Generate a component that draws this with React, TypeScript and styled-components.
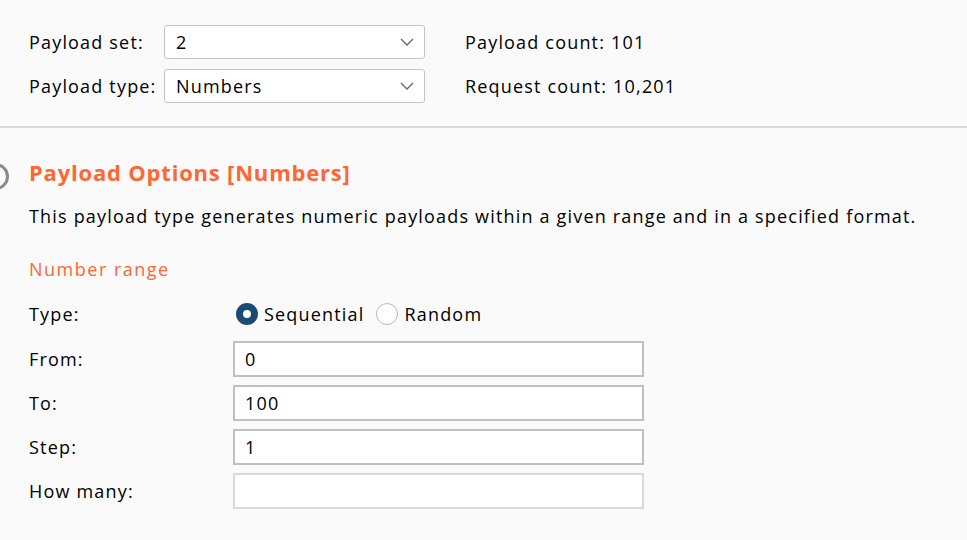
import React from "react";
import styled, { createGlobalStyle } from "styled-components";

const Global = createGlobalStyle`
  html, body { margin: 0; padding: 0; background: #fafafa; }
  body { font-family: "Open Sans", "Noto Sans", sans-serif; color: #000; }
  * { box-sizing: border-box; }
`;

const Page = styled.div`
  width: 967px;
  height: 540px;
  overflow: hidden;
  background: #fafafa;
  font-size: 18px;
  letter-spacing: 1.18px;
`;

const Top = styled.div`
  display: grid;
  grid-template-columns: 135px 261px auto;
  row-gap: 10px;
  padding: 25px 0 23px 29px;
  align-items: center;
  border-bottom: 2px solid #d9d9d9;
`;

const Label = styled.span<{ $gapBelow?: boolean }>`
  white-space: nowrap;
  line-height: 24px;
  margin-bottom: ${(p) => (p.$gapBelow ? "4px" : "0")};
`;

const Select = styled.div`
  height: 34px;
  border: 1.5px solid #c4c4c4;
  border-radius: 3px;
  background: #fff;
  display: flex;
  align-items: center;
  justify-content: space-between;
  padding: 0 10px 0 11px;
`;

const Stat = styled.span`
  padding-left: 40px;
  white-space: nowrap;
`;

const Options = styled.section`
  position: relative;
  padding: 29px 0 0 29px;
`;

const HelpCircle = styled.div`
  position: absolute;
  left: -18px;
  top: 35px;
  width: 27px;
  height: 27px;
  border-radius: 50%;
  border: 3px solid #8a8a8a;
`;

const Title = styled.h2`
  margin: 0;
  font-size: 22px;
  font-weight: 700;
  color: #ff6633;
  line-height: 30px;
  letter-spacing: 0.8px;
`;

const Desc = styled.p`
  margin: 16px 0 0;
  line-height: 26px;
`;

const SubTitle = styled.h3`
  margin: 27px 0 0;
  font-size: 18px;
  font-weight: 400;
  color: #ff6633;
  line-height: 26px;
  letter-spacing: 1.5px;
`;

const Form = styled.div`
  display: grid;
  grid-template-columns: 204px 411px;
  row-gap: 8px;
  margin-top: 17px;
  align-items: center;
`;

const RadioGroup = styled.div`
  display: flex;
  align-items: center;
  height: 30px;
  margin-bottom: 4px;
`;

const RadioOption = styled.label`
  display: flex;
  align-items: center;
  gap: 6px;
  margin-right: 12px;
  &:first-child { margin-left: 3px; }
`;

const RadioDot = styled.span<{ $checked?: boolean }>`
  width: 22px;
  height: 22px;
  border-radius: 50%;
  display: inline-block;
  background: #fff;
  border: ${(p) => (p.$checked ? "7px solid #1d4a75" : "1.5px solid #b9b9b9")};
`;

const Input = styled.div<{ $disabled?: boolean }>`
  height: 36px;
  border: 2px solid ${(p) => (p.$disabled ? "#d9d9d9" : "#c2bfbf")};
  background: #fff;
  display: flex;
  align-items: center;
  padding-left: 10px;
`;

const Chevron = () => (
  <svg width="14" height="8" viewBox="0 0 14 8">
    <path d="M1 1 L7 7 L13 1" fill="none" stroke="#666" strokeWidth="1.3" />
  </svg>
);

export default function App() {
  return (
    <Page>
      <Global />
      <Top>
        <Label>Payload set:</Label>
        <Select>
          <span>2</span>
          <Chevron />
        </Select>
        <Stat>Payload count: 101</Stat>
        <Label>Payload type:</Label>
        <Select>
          <span>Numbers</span>
          <Chevron />
        </Select>
        <Stat>Request count: 10,201</Stat>
      </Top>
      <Options>
        <HelpCircle />
        <Title>Payload Options [Numbers]</Title>
        <Desc>
          This payload type generates numeric payloads within a given range and in a specified format.
        </Desc>
        <SubTitle>Number range</SubTitle>
        <Form>
          <Label $gapBelow>Type:</Label>
          <RadioGroup>
            <RadioOption>
              <RadioDot $checked />
              Sequential
            </RadioOption>
            <RadioOption>
              <RadioDot />
              Random
            </RadioOption>
          </RadioGroup>
          <Label>From:</Label>
          <Input>0</Input>
          <Label>To:</Label>
          <Input>100</Input>
          <Label>Step:</Label>
          <Input>1</Input>
          <Label>How many:</Label>
          <Input $disabled />
        </Form>
      </Options>
    </Page>
  );
}
